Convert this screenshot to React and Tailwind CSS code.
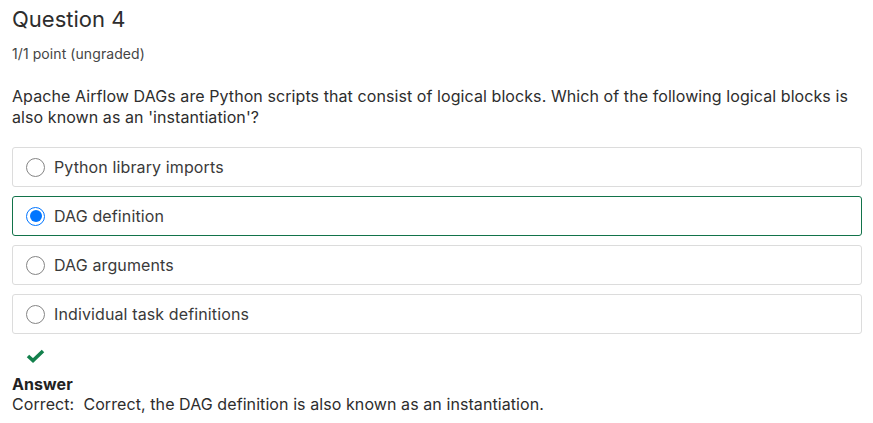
import { useState } from 'react'

const options = [
  'Python library imports',
  'DAG definition',
  'DAG arguments',
  'Individual task definitions',
]

function Radio({ checked }) {
  if (checked) {
    return (
      <span className="w-[19px] h-[19px] rounded-full border-[1.5px] border-[#0075ff] flex items-center justify-center shrink-0">
        <span className="w-[12px] h-[12px] rounded-full bg-[#0075ff]" />
      </span>
    )
  }
  return <span className="w-[19px] h-[19px] rounded-full border border-[#858585] shrink-0" />
}

export default function App() {
  const [picked, setPicked] = useState(1)

  return (
    <div className="bg-white min-h-[423px] px-3 text-[#333] tracking-[0.08px] font-['Inter',sans-serif]">
      <h2 className="text-[22px] leading-[28px] pt-[5px] tracking-normal text-[#2d2d2d]">Question 4</h2>
      <p className="text-[14px] leading-[20px] mt-[11px] text-[#454545]">1/1 point (ungraded)</p>
      <p className="text-[16px] leading-[21px] mt-[22px] text-[#2d2d2d]">
        Apache Airflow DAGs are Python scripts that consist of logical blocks. Which of the following logical blocks is
        also known as an 'instantiation'?
      </p>
      <div className="mt-[19px] w-[850px] flex flex-col gap-[9px]">
        {options.map((o, i) => (
          <button
            key={o}
            onClick={() => setPicked(i)}
            className={`h-[40px] flex items-center gap-[9px] pl-[13px] rounded-[3px] border text-left text-[16px] tracking-[0.12px] text-[#3a3a3a] ${
              picked === i ? 'border-[#12734a]' : 'border-[#dcdcdc]'
            }`}
          >
            <Radio checked={picked === i} />
            <span>{o}</span>
          </button>
        ))}
      </div>
      <div className="pl-[14px] mt-[15px]">
        <svg width="19" height="14" viewBox="0 0 19 14">
          <path d="M2 7 L7 11.5 L17 2" fill="none" stroke="#13804c" strokeWidth="3.6" strokeLinecap="butt" />
        </svg>
      </div>
      <div className="mt-[11px] text-[16px] leading-[20px] text-[#222]">
        <div className="font-bold">Answer</div>
        <div className="text-[#2d2d2d]">Correct:&nbsp; Correct, the DAG definition is also known as an instantiation.</div>
      </div>
    </div>
  )
}
